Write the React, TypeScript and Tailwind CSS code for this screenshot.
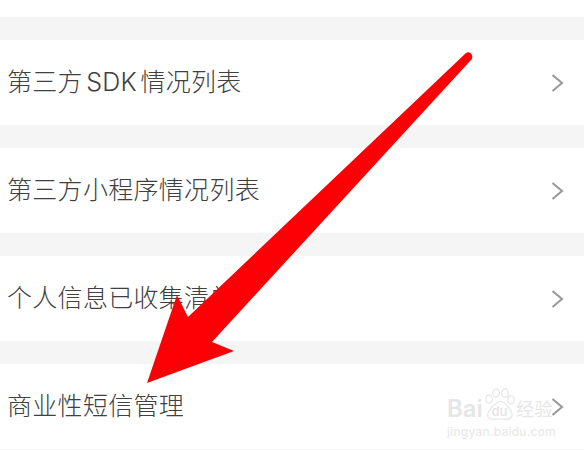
const font = { fontFamily: '"Inter","Noto Sans CJK SC",sans-serif' };

function Chevron() {
  return (
    <svg width="14" height="18" viewBox="0 0 14 18" fill="none" className="shrink-0">
      <path d="M2.5 1 L12 9 L2.5 17" stroke="#9a9a9a" strokeWidth="2.1" />
    </svg>
  );
}

function Row({ label }: { label: string }) {
  return (
    <div className="h-[85px] bg-white flex items-center justify-between pl-[7px] pr-[20px]">
      <span className="text-[25px] leading-none text-[#404040] tracking-[0.3px] [word-spacing:-4px] font-light">{label}</span>
      <Chevron />
    </div>
  );
}

function Gap() {
  return <div className="h-[23px] bg-[#f5f5f5]" />;
}

export default function App() {
  return (
    <div className="relative w-[584px] h-[450px] overflow-hidden bg-[#f5f5f5]" style={font}>
      <div className="h-[17px] bg-white" />
      <Gap />
      <Row label="第三方 SDK 情况列表" />
      <Gap />
      <Row label="第三方小程序情况列表" />
      <Gap />
      <Row label="个人信息已收集清单" />
      <Gap />
      <Row label="商业性短信管理" />

      <svg className="absolute left-0 top-0" width="584" height="450" viewBox="0 0 584 450">
        <path
          d="M147 383 L177 295 L188 317 L466 53 Q470 51 472 55 Q473 58 471 60 L212 342 L234 351 Z"
          fill="#fd0006"
        />
      </svg>

      <div className="absolute left-[447px] top-[387px] w-[108px] flex flex-col gap-[5px] text-[#e6e6e6]">
        <div className="flex items-end h-[34px]">
          <span className="text-[24px] leading-[24px] font-semibold w-[36px]">Bai</span>
          <div className="relative w-[33px] h-[33px] flex items-end justify-center">
            <svg className="absolute inset-0" width="33" height="33" viewBox="0 0 33 33" fill="none" stroke="#e6e6e6" strokeWidth="1.2">
              <ellipse cx="6" cy="11" rx="3.2" ry="4.2" />
              <ellipse cx="13" cy="5" rx="3.4" ry="4.2" />
              <ellipse cx="22" cy="5" rx="3.4" ry="4.2" />
              <ellipse cx="28" cy="12" rx="3.2" ry="4.2" />
              <path d="M17 13 C12 15 3 24 5 29 C7 33 13 31 17 31 C21 31 27 33 29 28 C30 23 22 14 17 13 Z" />
            </svg>
            <span className="text-[13px] leading-[20px] font-semibold">du</span>
          </div>
          <span className="text-[18px] leading-[22px] tracking-[0.5px]">经验</span>
        </div>
        <span className="text-[12px] leading-[12px] tracking-[0.3px] whitespace-nowrap">jingyan.baidu.com</span>
      </div>
    </div>
  );
}
